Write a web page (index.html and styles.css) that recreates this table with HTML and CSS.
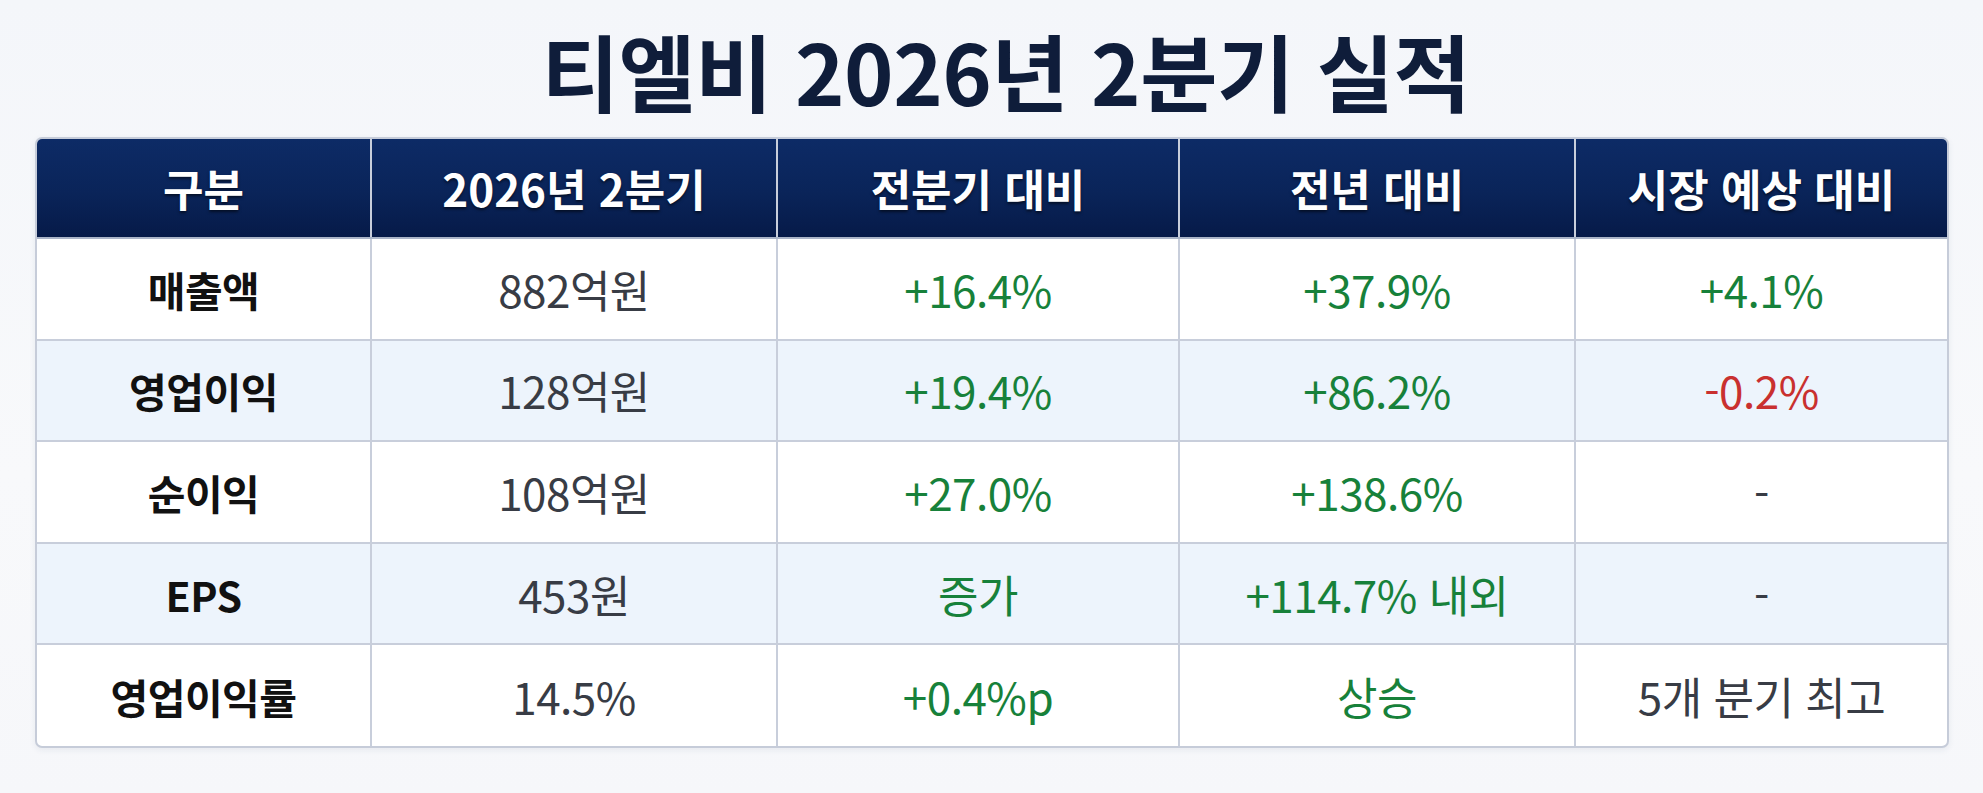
FILE: index.html
```html
<!DOCTYPE html>
<html lang="ko">
<head>
<meta charset="utf-8">
<title>티엘비 2026년 2분기 실적</title>
<link rel="stylesheet" href="styles.css">
</head>
<body>
<main class="page">
  <h1 class="title">티엘비 2026년 2분기 실적</h1>
  <div class="table-wrap">
    <table class="results">
      <colgroup>
        <col class="c1"><col class="c2"><col class="c3"><col class="c4"><col class="c5">
      </colgroup>
      <thead>
        <tr>
          <th>구분</th>
          <th>2026년 2분기</th>
          <th>전분기 대비</th>
          <th>전년 대비</th>
          <th>시장 예상 대비</th>
        </tr>
      </thead>
      <tbody>
        <tr>
          <td class="label">매출액</td>
          <td class="val">882억원</td>
          <td class="up">+16.4%</td>
          <td class="up">+37.9%</td>
          <td class="up">+4.1%</td>
        </tr>
        <tr class="alt">
          <td class="label">영업이익</td>
          <td class="val">128억원</td>
          <td class="up">+19.4%</td>
          <td class="up">+86.2%</td>
          <td class="down">-0.2%</td>
        </tr>
        <tr>
          <td class="label">순이익</td>
          <td class="val">108억원</td>
          <td class="up">+27.0%</td>
          <td class="up">+138.6%</td>
          <td class="val">-</td>
        </tr>
        <tr class="alt">
          <td class="label">EPS</td>
          <td class="val">453원</td>
          <td class="up">증가</td>
          <td class="up">+114.7% 내외</td>
          <td class="val">-</td>
        </tr>
        <tr>
          <td class="label">영업이익률</td>
          <td class="val">14.5%</td>
          <td class="up">+0.4%p</td>
          <td class="up">상승</td>
          <td class="val">5개 분기 최고</td>
        </tr>
      </tbody>
    </table>
  </div>
</main>
</body>
</html>
```

FILE: styles.css
```css
* { box-sizing: border-box; }

html, body {
  margin: 0;
  padding: 0;
}

body {
  background: linear-gradient(180deg, #f4f6fa 0%, #f8f9fb 60%, #f6f7fa 100%);
  font-family: "Noto Sans CJK KR", "Noto Sans", sans-serif;
  width: 1983px;
  height: 793px;
  overflow: hidden;
}

.page {
  display: flex;
  flex-direction: column;
  align-items: center;
  padding: 0 34px 0 35px;
}

.title {
  margin: 0;
  height: 137px;
  display: flex;
  align-items: center;
  justify-content: center;
  font-size: 84px;
  font-weight: 700;
  line-height: 1;
  color: #0f1d3a;
  letter-spacing: -0.5px;
  padding-top: 2px;
  padding-left: 28px;
}

.table-wrap {
  width: 1914px;
  border: 2px solid #c6ccd9;
  border-radius: 7px;
  overflow: hidden;
  background: #ffffff;
  box-shadow: 0 2px 6px rgba(40, 60, 100, 0.08);
}

.results {
  width: 100%;
  border-collapse: collapse;
  table-layout: fixed;
}

.c1 { width: 334px; }
.c2 { width: 406px; }
.c3 { width: 402px; }
.c4 { width: 396px; }
.c5 { width: 372px; }

.results th {
  height: 99px;
  background: linear-gradient(180deg, #0d2b66 0%, #0a2459 55%, #061a48 100%);
  color: #ffffff;
  font-size: 44px;
  font-weight: 700;
  text-align: center;
  padding: 0;
  border-right: 2px solid #c8cedb;
  border-bottom: 2px solid #aab4c8;
  text-shadow: 0 2px 3px rgba(0, 0, 0, 0.55);
}

.results th:last-child,
.results td:last-child {
  border-right: none;
}

.results td {
  height: 101.6px;
  text-align: center;
  padding: 0;
  font-size: 44px;
  border-right: 2px solid #c8cedb;
  border-bottom: 2px solid #c8cedb;
  letter-spacing: -0.5px;
}

.results tbody tr:last-child td {
  border-bottom: none;
}

.results tr.alt td {
  background: #edf4fc;
}

.results td.label {
  font-size: 41px;
  font-weight: 700;
  color: #111111;
}

.val {
  font-weight: 400;
  color: #383c45;
}

.up {
  font-weight: 400;
  color: #17813a;
}

.down {
  font-weight: 400;
  color: #c9302f;
}
```
